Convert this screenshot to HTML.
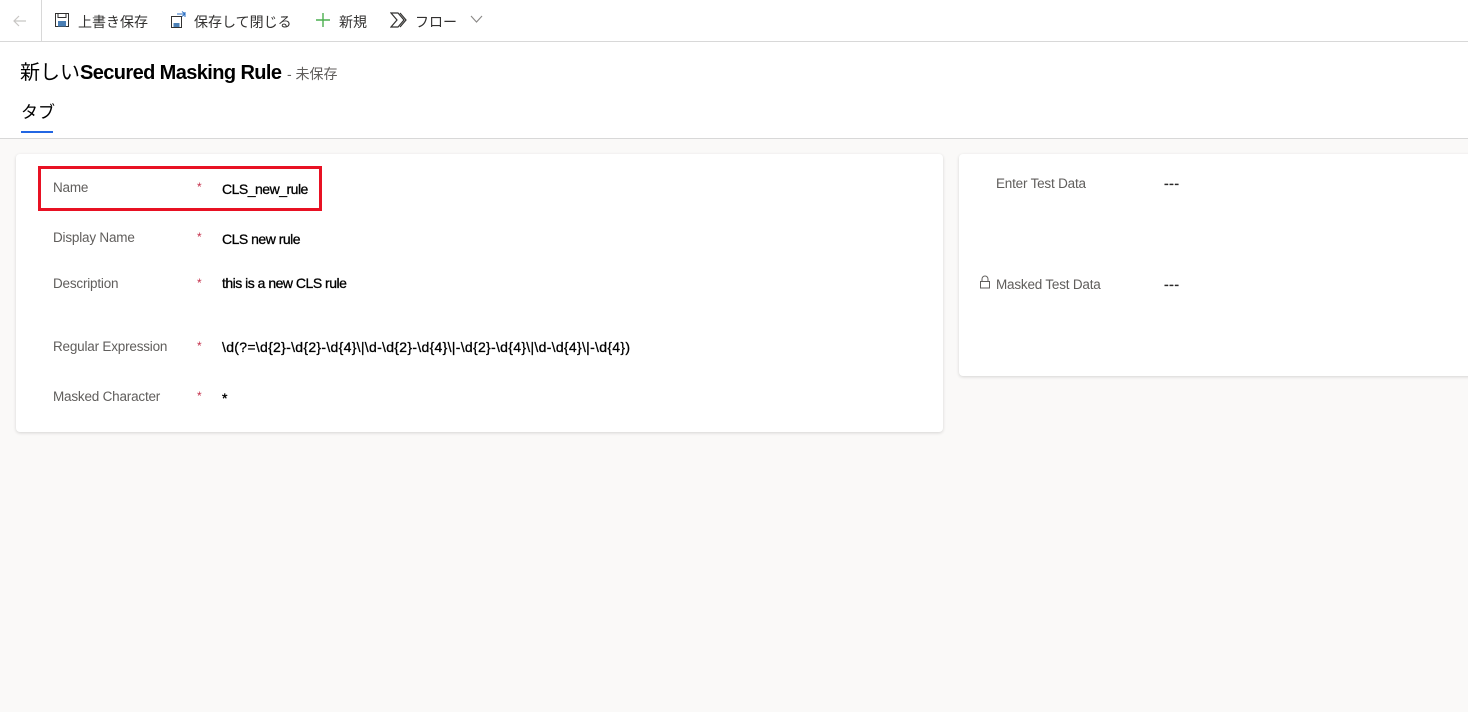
<!DOCTYPE html>
<html><head><meta charset="utf-8"><style>
*{margin:0;padding:0;box-sizing:border-box}
body{width:1468px;height:712px;background:#faf9f8;font-family:"Liberation Sans","Noto Sans CJK JP",sans-serif;color:#323130;position:relative;overflow:hidden}
.top{position:absolute;left:0;top:0;width:1468px;height:139px;background:#fff;border-bottom:1px solid #d8d8d8}
.bar{position:absolute;left:0;top:0;width:1468px;height:42px;border-bottom:1px solid #d8d8d8}
.abs{position:absolute;white-space:nowrap}
.cmd{font-size:14px;top:12px;color:#323130}
.card{position:absolute;background:#fff;border-radius:4px;box-shadow:0 1px 3px rgba(0,0,0,.15)}
.lbl{font-size:13.5px;color:#605e5c;letter-spacing:-0.2px}
.val{font-size:14px;color:#000;font-weight:normal;letter-spacing:-0.5px;-webkit-text-stroke:0.3px #000}
.req{font-size:12px;color:#c4314b}
</style></head><body>
<div class="top"></div>
<div class="bar"></div>
<div class="abs" style="left:41px;top:0;width:1px;height:42px;background:#d8d8d8"></div>
<svg class="abs" style="left:12px;top:13px" width="16" height="16" viewBox="0 0 16 16"><path d="M14 8H2M7 3L2 8l5 5" fill="none" stroke="#c8c6c4" stroke-width="1.2"/></svg>
<svg class="abs" style="left:55px;top:13px" width="14" height="14" viewBox="0 0 14 14"><rect x="0.5" y="0.5" width="13" height="13" fill="none" stroke="#323130"/><rect x="3" y="0.5" width="8" height="4" fill="none" stroke="#323130"/><rect x="3" y="8" width="8" height="5.5" fill="#4a7fb5"/></svg>
<div class="abs cmd" style="left:78px">上書き保存</div>
<svg class="abs" style="left:171px;top:11px" width="16" height="17" viewBox="0 0 16 17"><rect x="0.5" y="5.5" width="10" height="11" fill="none" stroke="#323130"/><rect x="2.5" y="12" width="6" height="4" fill="#4a7fb5"/><path d="M6 3h8M11 0.5l3 2.5-3 2.5M14 1v5" fill="none" stroke="#2f72c4"/></svg>
<div class="abs cmd" style="left:194px">保存して閉じる</div>
<svg class="abs" style="left:315px;top:12px" width="16" height="16" viewBox="0 0 16 16"><path d="M8 1v14M1 8h14" stroke="#4caf50" stroke-width="1.4"/></svg>
<div class="abs cmd" style="left:339px">新規</div>
<svg class="abs" style="left:390px;top:12px" width="18" height="16" viewBox="0 0 18 16"><path d="M1 1h7l6 7-6 7H1l6-7zM8 1l6 7M1 15l6-7" fill="none" stroke="#323130" stroke-width="1.2"/><path d="M10 1l6 7-6 7" fill="none" stroke="#323130" stroke-width="1.2"/></svg>
<div class="abs cmd" style="left:415px">フロー</div>
<svg class="abs" style="left:470px;top:15px" width="13" height="9" viewBox="0 0 13 9"><path d="M1 1l5.5 6L12 1" fill="none" stroke="#8a8886" stroke-width="1.1"/></svg>
<div class="abs" style="left:20px;top:56px;font-size:20px;color:#000">新しい<span style="font-weight:bold;letter-spacing:-0.6px">Secured Masking Rule</span> <span style="font-size:14px;color:#605e5c">- 未保存</span></div>
<div class="abs" style="left:21px;top:98px;font-size:17px;color:#000">タブ</div>
<div class="abs" style="left:21px;top:131px;width:32px;height:2px;background:#2266e3"></div>

<div class="card" style="left:16px;top:154px;width:927px;height:278px"></div>
<div class="abs" style="left:38px;top:166px;width:284px;height:45px;border:3px solid #e81123"></div>
<div class="abs lbl" style="left:53px;top:180px">Name</div>
<div class="abs req" style="left:197px;top:180px">*</div>
<div class="abs val" style="left:222px;top:181px">CLS_new_rule</div>
<div class="abs lbl" style="left:53px;top:230px">Display Name</div>
<div class="abs req" style="left:197px;top:230px">*</div>
<div class="abs val" style="left:222px;top:231px">CLS new rule</div>
<div class="abs lbl" style="left:53px;top:276px">Description</div>
<div class="abs req" style="left:197px;top:276px">*</div>
<div class="abs val" style="left:222px;top:275px">this is a new CLS rule</div>
<div class="abs lbl" style="left:53px;top:339px">Regular Expression</div>
<div class="abs req" style="left:197px;top:339px">*</div>
<div class="abs val" style="left:222px;top:339px;letter-spacing:0.3px">\d(?=\d{2}-\d{2}-\d{4}\|\d-\d{2}-\d{4}\|-\d{2}-\d{4}\|\d-\d{4}\|-\d{4})</div>
<div class="abs lbl" style="left:53px;top:389px">Masked Character</div>
<div class="abs req" style="left:197px;top:389px">*</div>
<div class="abs val" style="left:222px;top:390px">*</div>

<div class="card" style="left:959px;top:154px;width:520px;height:222px"></div>
<div class="abs lbl" style="left:996px;top:176px">Enter Test Data</div>
<div class="abs val" style="left:1164px;top:175px;color:#323130;letter-spacing:0.5px">---</div>
<svg class="abs" style="left:979px;top:275px" width="12" height="14" viewBox="0 0 12 14"><path d="M3 6V4a3 3 0 0 1 6 0v2" fill="none" stroke="#605e5c"/><rect x="1.5" y="6.5" width="9" height="6.5" fill="none" stroke="#605e5c"/></svg>
<div class="abs lbl" style="left:996px;top:277px">Masked Test Data</div>
<div class="abs val" style="left:1164px;top:276px;color:#323130;letter-spacing:0.5px">---</div>
</body></html>
